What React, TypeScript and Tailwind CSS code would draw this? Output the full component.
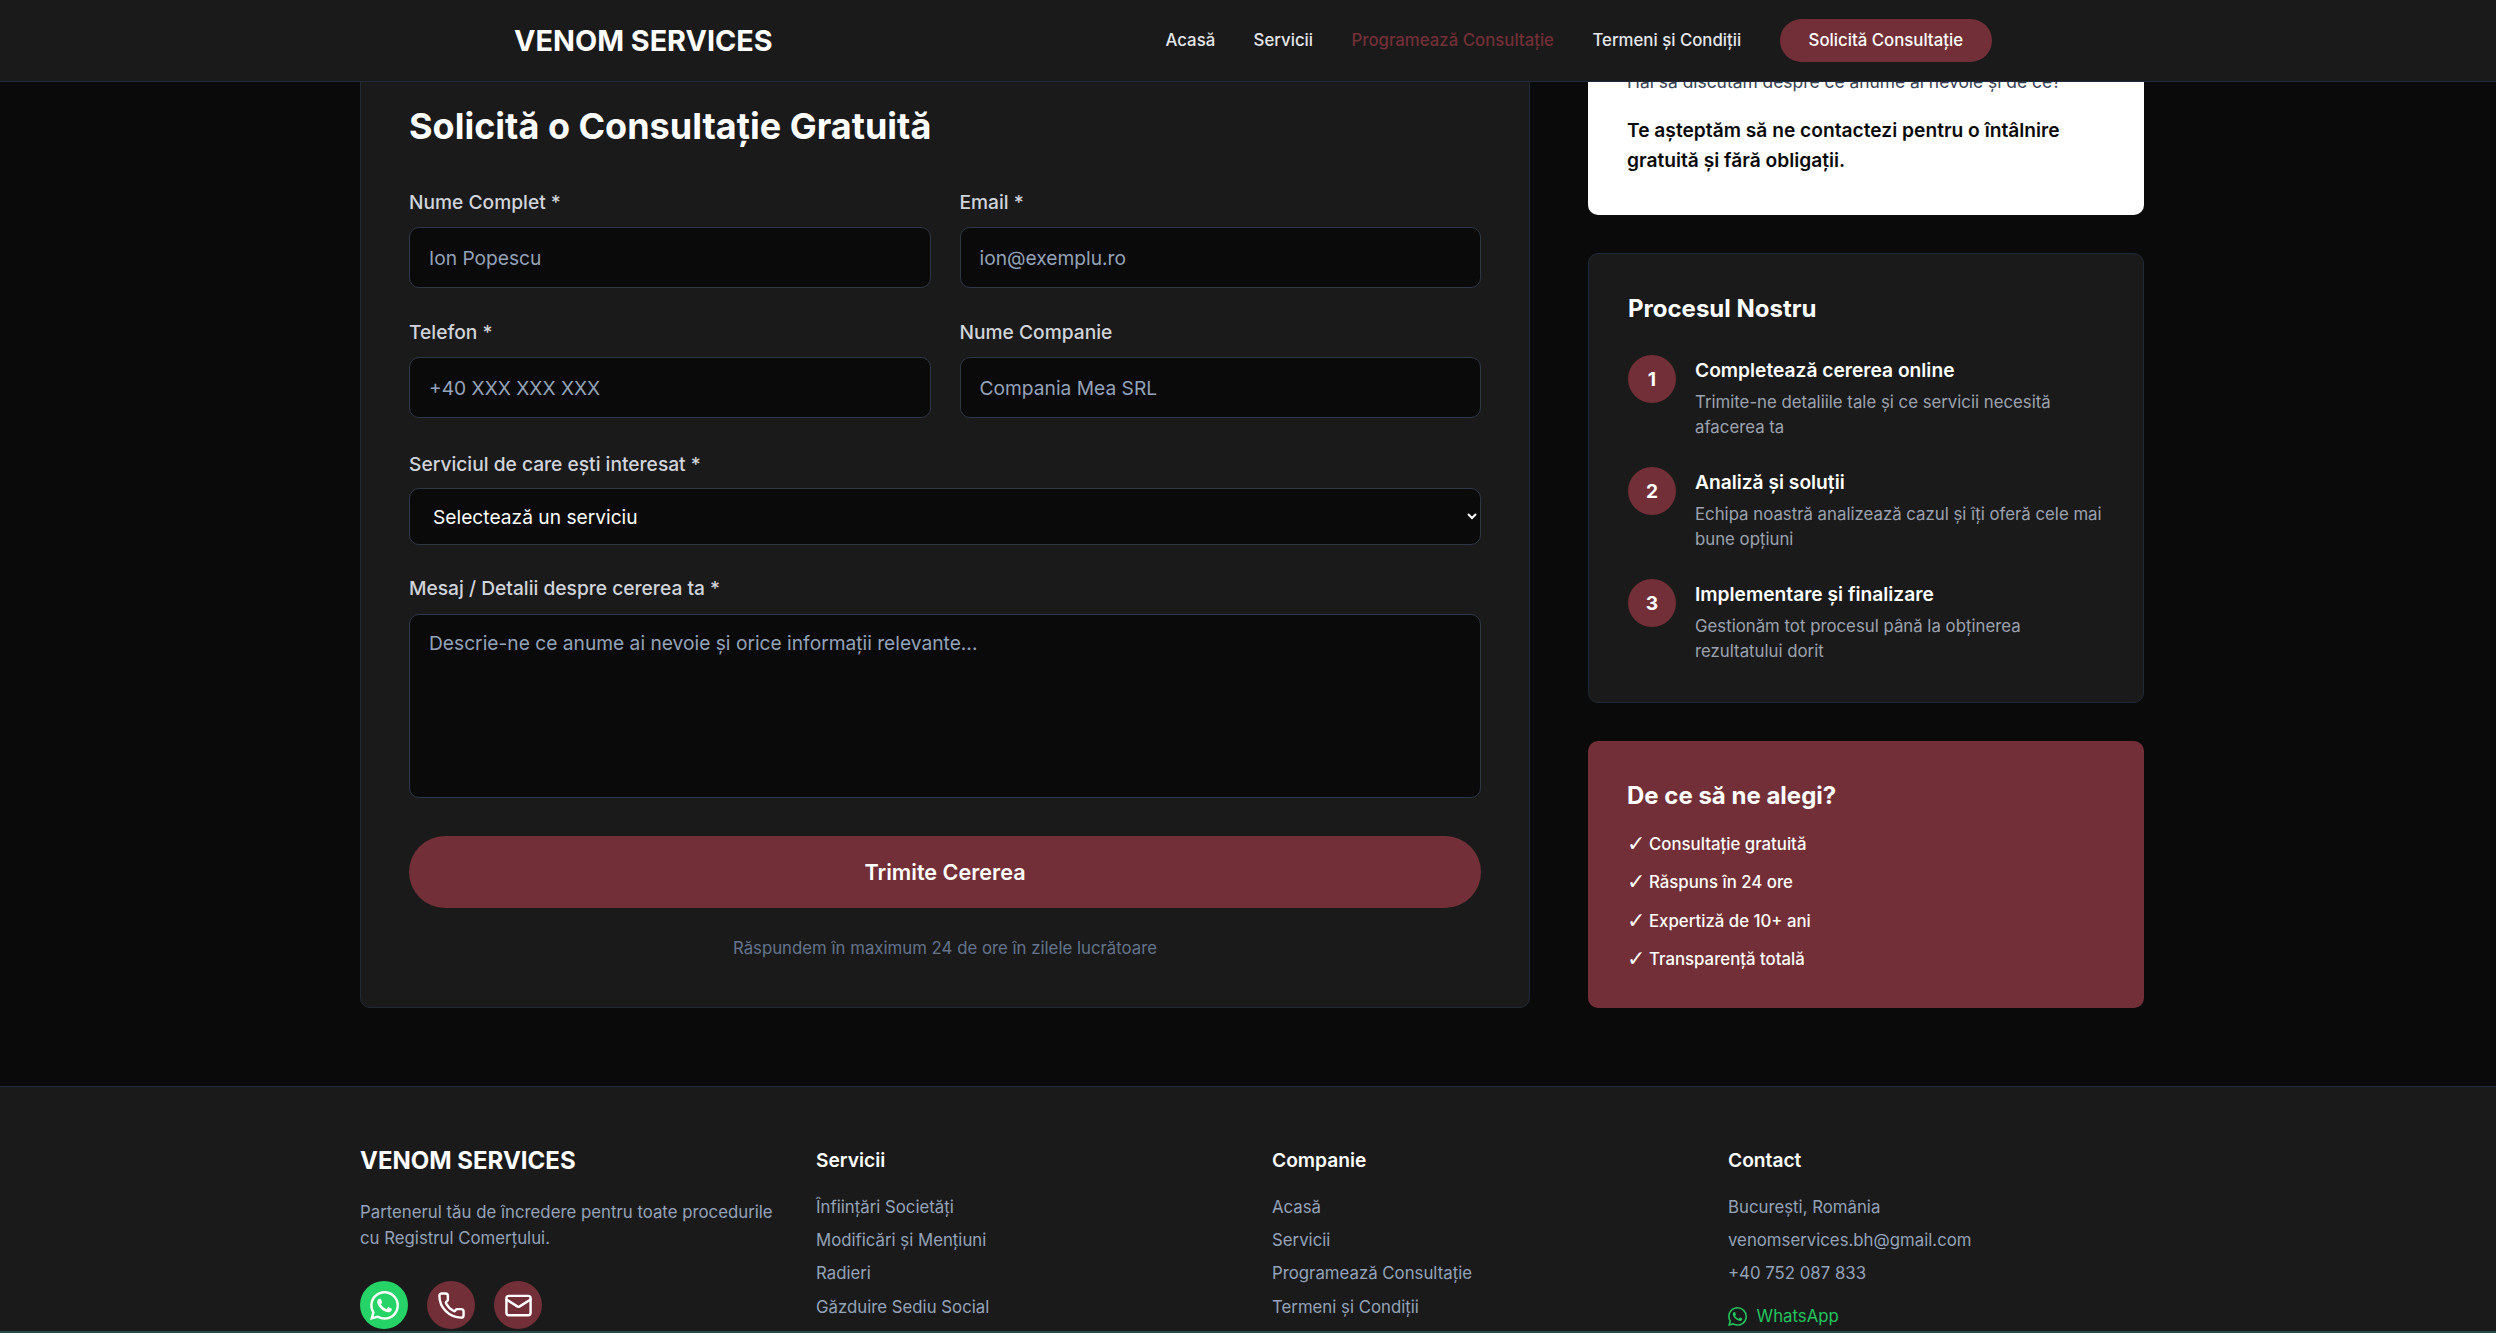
import { Phone, Mail } from "lucide-react";
import { SiWhatsapp } from "react-icons/si";

const labelClass = "block h-[30px] text-[19.2px] leading-[30px] font-medium text-[#d1d5db]";
const controlClass =
  "w-full rounded-[10px] border border-[#2d3748] bg-[#0a0a0a] px-[19px] text-[19.2px] text-white placeholder:text-[#94a3b8] outline-none";

function Field({ label, placeholder }: { label: string; placeholder: string }) {
  return (
    <div>
      <label className={labelClass + " mb-[10px]"}>{label}</label>
      <input type="text" placeholder={placeholder} className={controlClass + " h-[61px]"} />
    </div>
  );
}

function Step({ n, title, text }: { n: number; title: string; text: string }) {
  return (
    <div className="flex gap-[19px]">
      <div className="flex h-12 w-12 shrink-0 items-center justify-center rounded-full bg-[#722f37] text-[19.2px] font-bold text-white">
        {n}
      </div>
      <div className="min-w-0">
        <p className="text-[19.2px] leading-[30.7px] font-semibold text-white">{title}</p>
        <p className="mt-[4px] text-[16.8px] leading-[25px] text-[#9ca3af]">{text}</p>
      </div>
    </div>
  );
}

function FooterCol({ title, links }: { title: string; links: string[] }) {
  return (
    <div>
      <h4 className="mb-[19px] text-[19.2px] leading-[30px] font-semibold text-white">{title}</h4>
      <ul className="flex flex-col gap-[6.5px]">
        {links.map((link) => (
          <li key={link} className="text-[16.8px] leading-[26.88px] text-[#94a3b8]">
            {link}
          </li>
        ))}
      </ul>
    </div>
  );
}

export default function App() {
  return (
    <div className="relative h-[1333px] overflow-hidden bg-[#0a0a0a] font-['Inter',sans-serif]">
      <header className="relative z-10 flex h-[82px] items-center justify-between border-b border-[#1f2937] bg-[#1a1a1a] pl-[514px] pr-[504px]">
        <span className="text-[28.8px] font-bold text-white">VENOM SERVICES</span>
        <nav className="flex items-center gap-[38.4px] text-[16.8px] font-medium text-[#e5e7eb]">
          <a>Acasă</a>
          <a>Servicii</a>
          <a className="text-[#722f37]">Programează Consultație</a>
          <a>Termeni și Condiții</a>
          <a className="flex h-[43px] items-center rounded-full bg-[#722f37] px-[29px] text-white">Solicită Consultație</a>
        </nav>
      </header>

      <main className="ml-[360px] -mt-[33px] grid w-[1784px] grid-cols-[1170px_556px] gap-[58px]">
        <section className="rounded-[10px] border border-[#1f2937] bg-[#1a1a1a] px-[48px] pt-[49px] pb-[45px]">
          <h1 className="mb-[34px] text-[36px] leading-[54px] font-bold text-white">Solicită o Consultație Gratuită</h1>
          <div className="grid grid-cols-2 gap-x-[29px] gap-y-[29px]">
            <Field label="Nume Complet *" placeholder="Ion Popescu" />
            <Field label="Email *" placeholder="ion@exemplu.ro" />
            <Field label="Telefon *" placeholder="+40 XXX XXX XXX" />
            <Field label="Nume Companie" placeholder="Compania Mea SRL" />
          </div>
          <div className="mt-[31px]">
            <label className={labelClass + " mb-[9px]"}>Serviciul de care ești interesat *</label>
            <select defaultValue="" className={controlClass + " h-[57px] [color-scheme:dark]"}>
              <option value="">Selectează un serviciu</option>
            </select>
          </div>
          <div className="mt-[28px]">
            <label className={labelClass + " mb-[11px]"}>Mesaj / Detalii despre cererea ta *</label>
            <textarea
              placeholder="Descrie-ne ce anume ai nevoie și orice informații relevante..."
              className={controlClass + " block h-[184px] resize-none py-[13px] leading-[30px]"}
            />
          </div>
          <button type="button" className="mt-[38px] h-[72px] w-full rounded-full bg-[#722f37] text-[21.6px] font-semibold text-white">
            Trimite Cererea
          </button>
          <p className="mt-[27px] text-center text-[16.8px] leading-[27px] text-[#64748b]">
            Răspundem în maximum 24 de ore în zilele lucrătoare
          </p>
        </section>

        <aside className="flex flex-col gap-[38.4px]">
          <div className="h-[166px] rounded-[10px] bg-white px-[39px] pt-[18.6px] text-[#374151]">
            <p className="text-[17.4px] leading-[27px]">Hai să discutăm despre ce anume ai nevoie și de ce?</p>
            <p className="mt-[20px] text-[19.2px] leading-[30.7px] font-semibold text-[#0a0a0a]">
              Te așteptăm să ne contactezi pentru o întâlnire gratuită și fără obligații.
            </p>
          </div>

          <div className="rounded-[10px] border border-[#1f2937] bg-[#1a1a1a] px-[39px] pt-[37px] pb-[38px]">
            <h3 className="mb-[28px] text-[24px] leading-[36px] font-bold text-white">Procesul Nostru</h3>
            <div className="flex flex-col gap-[27.3px]">
              <Step n={1} title="Completează cererea online" text="Trimite-ne detaliile tale și ce servicii necesită afacerea ta" />
              <Step n={2} title="Analiză și soluții" text="Echipa noastră analizează cazul și îți oferă cele mai bune opțiuni" />
              <Step n={3} title="Implementare și finalizare" text="Gestionăm tot procesul până la obținerea rezultatului dorit" />
            </div>
          </div>

          <div className="flex-1 rounded-[10px] bg-[#722f37] px-[39px] pt-[37px] text-white">
            <h3 className="mb-[16.6px] text-[24px] leading-[36px] font-bold">De ce să ne alegi?</h3>
            <ul className="flex flex-col gap-[11.5px] text-[16.8px] leading-[26.88px] font-medium">
              {["Consultație gratuită", "Răspuns în 24 ore", "Expertiză de 10+ ani", "Transparență totală"].map((item) => (
                <li key={item} className="flex">
                  <span className="w-[22px] font-['DejaVu_Sans',sans-serif] text-[22px] leading-[26.88px]">✓</span>
                  {item}
                </li>
              ))}
            </ul>
          </div>
        </aside>
      </main>

      <footer className="mt-[78px] h-[300px] border-t border-[#1f2937] bg-[#1a1a1a] pt-[57.6px]">
        <div className="ml-[360px] grid w-[1784px] grid-cols-4 gap-[40px]">
          <div>
            <h3 className="mb-[22px] text-[24px] leading-[32px] font-bold text-white">VENOM SERVICES</h3>
            <p className="text-[16.8px] leading-[26.88px] text-[#94a3b8]">
              Partenerul tău de încredere pentru toate procedurile cu Registrul Comerțului.
            </p>
            <div className="mt-[28.8px] flex gap-[19px]">
              <a className="flex h-12 w-12 items-center justify-center rounded-full bg-[#25d366] text-white">
                <SiWhatsapp size={29} />
              </a>
              <a className="flex h-12 w-12 items-center justify-center rounded-full bg-[#722f37] text-white">
                <Phone size={29} />
              </a>
              <a className="flex h-12 w-12 items-center justify-center rounded-full bg-[#722f37] text-white">
                <Mail size={29} />
              </a>
            </div>
          </div>
          <FooterCol title="Servicii" links={["Înființări Societăți", "Modificări și Mențiuni", "Radieri", "Găzduire Sediu Social"]} />
          <FooterCol title="Companie" links={["Acasă", "Servicii", "Programează Consultație", "Termeni și Condiții"]} />
          <div>
            <FooterCol title="Contact" links={["București, România", "venomservices.bh@gmail.com", "+40 752 087 833"]} />
            <a className="mt-[16px] flex items-center gap-[9.6px] text-[16.8px] leading-[26.88px] text-[#22c55e]">
              <SiWhatsapp size={19} />
              WhatsApp
            </a>
          </div>
        </div>
      </footer>

      <div className="absolute inset-x-0 bottom-0 h-[2px] bg-[#2a4a4a]" />
    </div>
  );
}
